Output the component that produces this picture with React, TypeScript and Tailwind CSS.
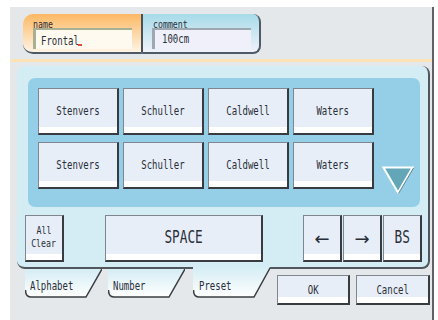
import React from 'react';

const mono = "font-['DejaVu_Sans_Mono','Liberation_Mono',monospace] text-[#2a2e38]";
const key =
  'flex items-center justify-center border border-[#80868d] border-r-2 border-b-2 border-r-[#383b40] border-b-[#383b40] bg-[linear-gradient(to_bottom,#e7eef7_calc(100%_-_6px),#ffffff_calc(100%_-_6px))]';

const presets = ['Stenvers', 'Schuller', 'Caldwell', 'Waters', 'Stenvers', 'Schuller', 'Caldwell', 'Waters'];

const Label: React.FC<{ text: string; size?: string; left?: boolean }> = ({ text, size = 'text-[12px]', left }) => (
  <span className={`${mono} ${size} inline-block scale-x-[0.75] whitespace-pre ${left ? 'origin-left' : ''}`}>{text}</span>
);

const Tab: React.FC<{ text: string; id: string; active?: boolean; className?: string }> = ({ text, id, active, className }) => {
  const h = active ? 31 : 29;
  return (
    <div className={`relative w-[77px] ${active ? 'h-[31px] -mt-[2px] z-10 pt-[10px] pl-[6px]' : 'h-[29px] pt-[8px] pl-[5px]'} ${className ?? ''}`}>
      <svg className="absolute inset-0" width="77" height={h} viewBox={`0 0 77 ${h}`}>
        <defs>
          <linearGradient id={id} x1="0" y1="0" x2="0" y2="1">
            <stop offset="0" stopColor="#d4edf4" />
            <stop offset="1" stopColor="#ffffff" />
          </linearGradient>
        </defs>
        <path d={`M0 0 H77 L61 ${h - 1} H6 Q0 ${h - 1} 0 ${h - 7} Z`} fill={`url(#${id})`} />
        <path d={`M0.5 ${h - 8} Q0.5 ${h - 1} 6 ${h - 1} H61 L77 ${active ? 1 : 0}`} fill="none" stroke="#3a3d42" strokeWidth="1.5" />
      </svg>
      <div className="relative leading-[14px]">
        <Label text={text} left />
      </div>
    </div>
  );
};

export default function App() {
  return (
    <div className="w-[438px] h-[320px] bg-white pt-[7px] pl-[10px] pr-[4px] overflow-hidden">
      <div className="h-full bg-[#e5e8eb] border-r-2 border-[#5e6266] flex flex-col">
        {/* name / comment header */}
        <div className="mt-[7px] ml-[13px] flex h-[40px]">
          <div className="w-[120px] rounded-l-[10px] border-b-2 border-r-2 border-b-[#4e5b66] border-r-[#4a5058] bg-[linear-gradient(to_bottom,#fcb863,#fff4e6)] pl-[10px] pt-[2px]">
            <div className="leading-[12px] h-[12px]">
              <Label text="name" size="text-[11px]" left />
            </div>
            <div className="w-[99px] h-[21px] bg-[#fffaf0] border-l-[3px] border-t-2 border-[#a9af90] pl-[5px] flex items-center pb-[2px]">
              <div className="relative leading-[14px] h-[14px]">
                <Label text="Frontal" left />
                <span className="absolute left-[37px] top-[12px] w-[4px] h-[2px] bg-[#e0503a]" />
              </div>
            </div>
          </div>
          <div className="w-[118px] rounded-r-[8px] border-r-2 border-b-2 border-[#4e5b66] bg-[linear-gradient(to_bottom,#a6dbe8,#f0f2fb)] pl-[9px] pt-[2px]">
            <div className="leading-[12px] h-[12px] pl-[1px]">
              <Label text="comment" size="text-[11px]" left />
            </div>
            <div className="w-[99px] h-[21px] bg-[#eff0fa] border-l-[3px] border-t-2 border-[#9ea8b0] pl-[7px] flex items-center pb-[2px]">
              <Label text="100cm" left />
            </div>
          </div>
        </div>

        <div className="mt-[5px] h-[3px] bg-[#fde2b8]" />

        {/* keyboard panel */}
        <div className="mt-[4px] ml-[7px] mr-[2px] h-[203px] rounded-[8px] border-r-2 border-b-2 border-[#50565c] bg-[#d4edf4] pt-[12px]">
          <div className="ml-[11px] w-[392px] h-[129px] rounded-[7px] bg-[#95cfe7] pl-[10px] pt-[10px] flex">
            <div className="grid grid-cols-[repeat(4,81px)] auto-rows-[47px] gap-x-[4px] gap-y-[7px] h-fit">
              {presets.map((p, i) => (
                <button key={i} className={key}>
                  <Label text={p} />
                </button>
              ))}
            </div>
            <svg className="ml-[8px] mt-[78px]" width="32" height="28" viewBox="0 0 32 28">
              <polygon points="1.5,1.5 30.5,1.5 16,26.5" fill="#62a6b7" stroke="#ffffff" strokeWidth="2" />
              <path d="M31.5 2 L16.5 27.5" stroke="#3f6b78" strokeWidth="0.8" fill="none" />
            </svg>
          </div>

          <div className="mt-[8px] ml-[8px] flex items-start">
            <button className={`${key} w-[39px] h-[47px] flex-col leading-[13px] pb-[3px]`}>
              <Label text="All" size="text-[11px]" />
              <Label text="Clear" size="text-[11px]" />
            </button>
            <button className={`${key} ml-[41px] w-[158px] h-[47px]`}>
              <Label text="SPACE" size="text-[17px]" />
            </button>
            <div className="ml-[40px] flex gap-[1px]">
              <button className={`${key} w-[39px] h-[47px]`}>
                <span className="font-['DejaVu_Sans',sans-serif] text-[18px] text-[#2a2e38]">←</span>
              </button>
              <button className={`${key} w-[39px] h-[47px]`}>
                <span className="font-['DejaVu_Sans',sans-serif] text-[18px] text-[#2a2e38]">→</span>
              </button>
              <button className={`${key} w-[39px] h-[47px]`}>
                <Label text="BS" size="text-[17px]" />
              </button>
            </div>
          </div>
        </div>

        {/* mode tabs and actions */}
        <div className="flex items-start">
          <Tab text="Alphabet" id="tab-a" className="ml-[15px]" />
          <Tab text="Number" id="tab-n" className="ml-[6px]" />
          <Tab text="Preset" id="tab-p" active className="ml-[8px]" />
          <button className={`${key} ml-[7px] mt-[6px] w-[73px] h-[30px]`}>
            <Label text="OK" />
          </button>
          <button className={`${key} ml-[6px] mt-[6px] w-[74px] h-[30px]`}>
            <Label text="Cancel" />
          </button>
        </div>
      </div>
    </div>
  );
}
